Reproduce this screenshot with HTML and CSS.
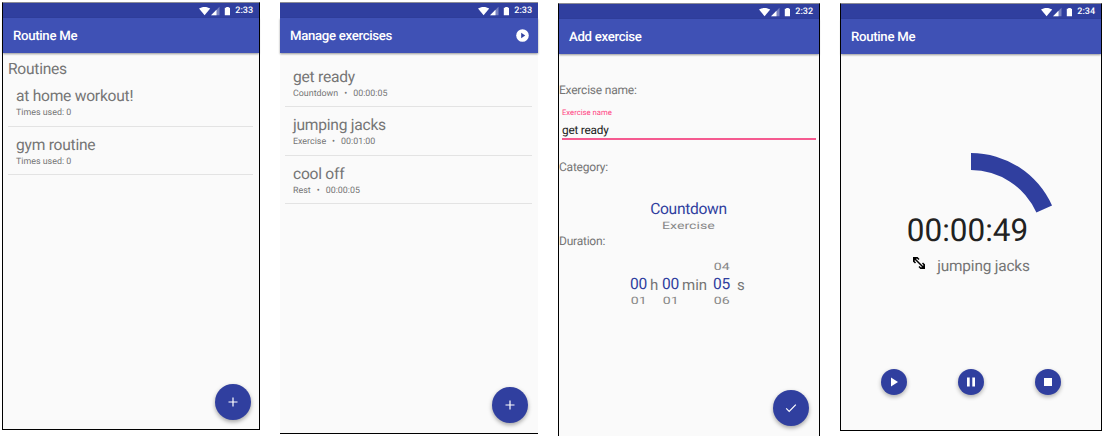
FILE: index.html
```html
<!DOCTYPE html>
<html lang="en">
<head>
<meta charset="utf-8">
<title>Routine Me</title>
<link rel="stylesheet" href="styles.css">
</head>
<body>
<svg class="defs" width="0" height="0">
  <symbol id="status" viewBox="0 0 34 10">
    <path fill="#fff" d="M0 2.600C3 .3 8.200 .3 11.200 2.600L5.600 9.300Z"/>
    <path fill="#fff" fill-opacity=".35" d="M20.500 .8V9.200H12.100Z"/>
    <path fill="#fff" d="M17.500 3.800V9.200H12.100Z"/>
    <path fill="#fff" d="M27.200 1.800V1H29.800V1.800H31V9.200H25.800V1.800Z"/>
  </symbol>
</svg>
<main class="board">
  <section class="phone phone-routines">
    <div class="status"><svg class="status-icons"><use href="#status"/></svg><span class="clock">2:33</span></div>
    <header class="bar"><h1 class="title">Routine Me</h1></header>
    <div class="content">
      <h2 class="heading">Routines</h2>
      <ul class="list">
        <li class="row"><span class="name">at home workout!</span><span class="meta">Times used: 0</span></li>
        <li class="row"><span class="name">gym routine</span><span class="meta">Times used: 0</span></li>
      </ul>
    </div>
    <button class="fab"><svg width="12" height="12" viewBox="0 0 12 12"><path d="M6 1.500V10.500M1.500 6H10.500" stroke="#fff" stroke-width="1.200"/></svg></button>
  </section>

  <section class="phone phone-exercises">
    <div class="status"><svg class="status-icons"><use href="#status"/></svg><span class="clock">2:33</span></div>
    <header class="bar"><h1 class="title">Manage exercises</h1>
      <svg class="start" width="13" height="13" viewBox="0 0 13 13"><circle cx="6.500" cy="6.500" r="6.300" fill="#fff"/><path d="M5.200 3.700V9.300L9.200 6.500Z" fill="#3040a0"/></svg>
    </header>
    <div class="content">
      <ul class="list">
        <li class="row"><span class="name">get ready</span><span class="meta">Countdown<i class="dot">•</i>00:00:05</span></li>
        <li class="row"><span class="name">jumping jacks</span><span class="meta">Exercise<i class="dot">•</i>00:01:00</span></li>
        <li class="row"><span class="name">cool off</span><span class="meta">Rest<i class="dot">•</i>00:00:05</span></li>
      </ul>
    </div>
    <button class="fab"><svg width="12" height="12" viewBox="0 0 12 12"><path d="M6 1.500V10.500M1.500 6H10.500" stroke="#fff" stroke-width="1.200"/></svg></button>
  </section>

  <section class="phone phone-add">
    <div class="status"><svg class="status-icons"><use href="#status"/></svg><span class="clock">2:32</span></div>
    <header class="bar"><h1 class="title">Add exercise</h1></header>
    <div class="content">
      <p class="label">Exercise name:</p>
      <div class="field"><span class="hint">Exercise name</span><span class="value">get ready</span></div>
      <p class="label">Category:</p>
      <div class="category"><span class="picked">Countdown</span><span class="tilted">Exercise</span></div>
      <p class="label">Duration:</p>
      <div class="duration">
        <div class="wheel"><span class="tilted"></span><span class="picked">00</span><span class="tilted">01</span></div>
        <span class="unit unit-h">h</span>
        <div class="wheel"><span class="tilted"></span><span class="picked">00</span><span class="tilted">01</span></div>
        <span class="unit unit-min">min</span>
        <div class="wheel"><span class="tilted">04</span><span class="picked">05</span><span class="tilted">06</span></div>
        <span class="unit unit-s">s</span>
      </div>
    </div>
    <button class="fab"><svg width="12" height="12" viewBox="0 0 12 12"><path d="M1.200 6.400L4.200 9.400L10.800 2.600" fill="none" stroke="#fff" stroke-width="1.200"/></svg></button>
  </section>

  <section class="phone phone-timer">
    <div class="status"><svg class="status-icons"><use href="#status"/></svg><span class="clock">2:34</span></div>
    <header class="bar"><h1 class="title">Routine Me</h1></header>
    <div class="content">
      <svg class="arc" width="178" height="64" viewBox="0 0 178 64"><path fill="#303f9f" d="M89 0A88.700 88.700 0 0 1 170.030 52.620L154.400 59.580A71.600 71.600 0 0 0 89 17.100Z"/></svg>
      <div class="time">00:00:49</div>
      <div class="current">
        <svg width="14" height="14" viewBox="0 0 14 14"><path d="M1 1H6.200L1 6.200ZM13 7.800V13H7.800Z" fill="#000"/><path d="M3 3L11 11M1.500 5L3.500 7M5 1.500L7 3.500M7 10.500L9 12.500M10.500 7L12.500 9" stroke="#000" stroke-width="1.500"/></svg>
        <span>jumping jacks</span>
      </div>
      <div class="controls">
        <button class="mini"><svg width="12" height="12" viewBox="0 0 12 12"><path d="M3 1.500V10.500L10 6Z" fill="#fff"/></svg></button>
        <button class="mini"><svg width="12" height="12" viewBox="0 0 12 12"><path d="M2 1.500H4.700V10.500H2ZM7.300 1.500H10V10.500H7.300Z" fill="#fff"/></svg></button>
        <button class="mini"><svg width="12" height="12" viewBox="0 0 12 12"><path d="M2 2H10V10H2Z" fill="#fff"/></svg></button>
      </div>
    </div>
  </section>
</main>
</body>
</html>
```
FILE: styles.css
```css
* { box-sizing: border-box; margin: 0; padding: 0; }
body { width: 1102px; height: 436px; overflow: hidden; background: #fff; font-family: Roboto, sans-serif; color: #757575; text-rendering: geometricPrecision; }
.defs { position: absolute; }
.board { display: flex; gap: 20px; padding: 2px 0 0 2px; align-items: flex-start; }
.phone { position: relative; flex: none; display: flex; flex-direction: column; width: 258px; border: 1px solid #000; border-top-color: #8c8c96; background: #fafafa; }
.phone-routines { height: 428px; }
.phone-exercises { height: 432px; border-left: 0; border-right: 0; }
.phone-add { width: 262px; height: 436px; margin-top: 1px; }
.phone-timer { width: 262px; height: 428px; margin-top: 1px; }
.status { flex: none; height: 15px; padding-right: 6px; display: flex; align-items: center; justify-content: flex-end; background: #303f9f; }
.status-icons { width: 34px; height: 10px; margin-right: 2px; }
.clock { font-size: 9px; line-height: 17px; padding-top: 1px; font-weight: 500; color: #fff; }
.bar { flex: none; height: 35px; padding: 1px 9px 0 10px; display: flex; align-items: center; justify-content: space-between; background: #3f51b5; box-shadow: 0 1px 2px rgba(0,0,0,.4); }
.title { padding-top: 1px; font-size: 13.200px; line-height: 17px; letter-spacing: -.3px; font-weight: 500; color: #fff; }
.phone-exercises .title { letter-spacing: -.31px; }
.start { margin-top: -1px; }
.content { display: flex; flex-direction: column; }
.heading { margin: 5px 0 0 5px; font-size: 15.600px; line-height: 22px; letter-spacing: -.25px; font-weight: 400; }
.list { list-style: none; margin: 0 6px 0 5px; }
.row { height: 48.5px; padding: 8px 0 0 8px; display: flex; flex-direction: column; border-bottom: 1.5px solid #e3e3e3; }
.name { font-size: 15.600px; line-height: 20px; letter-spacing: -.25px; }
.meta { margin-top: 1px; font-size: 8.900px; line-height: 12px; }
.dot { font-style: normal; margin: 0 6px; }
.phone-routines .list { margin-top: -2px; }
.phone-exercises .list { margin-top: 5.500px; }
.fab { position: absolute; right: 8px; bottom: 9px; width: 36px; height: 36px; border: 0; border-radius: 50%; display: flex; align-items: center; justify-content: center; background: #303f9f; box-shadow: 0 2px 4px rgba(0,0,0,.35); }
.phone-exercises .fab { right: 10px; bottom: 10px; }
.phone-add .fab { right: 10px; bottom: 12px; }
.label { font-size: 12px; line-height: 16px; letter-spacing: -.22px; }
.phone-add .content { padding-top: 28px; }
.field { display: flex; flex-direction: column; margin: 10px 3px 19px 3px; border-bottom: 2px solid #f55a90; }
.hint { font-size: 7.700px; line-height: 10px; color: #ff4081; }
.value { margin-top: 4px; font-size: 11.800px; line-height: 16px; letter-spacing: -.2px; color: #212121; }
.category { display: flex; flex-direction: column; align-items: center; padding-top: 24px; height: 58px; margin-right: 1px; }
.picked { font-size: 15.600px; line-height: 20px; letter-spacing: -.3px; color: #303f9f; }
.tilted { height: 14px; font-size: 12px; line-height: 14px; color: #888; transform: scale(1.180,.85); }
.duration { display: flex; align-items: center; padding: 11px 0 0 70px; }
.wheel { width: 19px; display: flex; flex-direction: column; align-items: center; }
.unit { font-size: 15px; line-height: 20px; padding-top: 1px; }
.unit-h { width: 13px; padding-left: 2px; }
.unit-min { width: 32px; padding-left: 2px; }
.unit-s { padding-left: 6px; }
.phone-timer .content { align-items: center; }
.arc { margin-top: 99px; }
.time { margin: -4px 7px 0 0; font-size: 31.500px; line-height: 36px; color: #212121; }
.current { display: flex; gap: 11px; font-size: 15.400px; line-height: 20px; letter-spacing: -.18px; margin-top: 7px; }
.controls { display: flex; gap: 51px; margin-top: 93px; }
.mini { width: 26px; height: 26px; border: 0; border-radius: 50%; display: flex; align-items: center; justify-content: center; background: #303f9f; box-shadow: 0 2px 4px rgba(0,0,0,.3); }
```
